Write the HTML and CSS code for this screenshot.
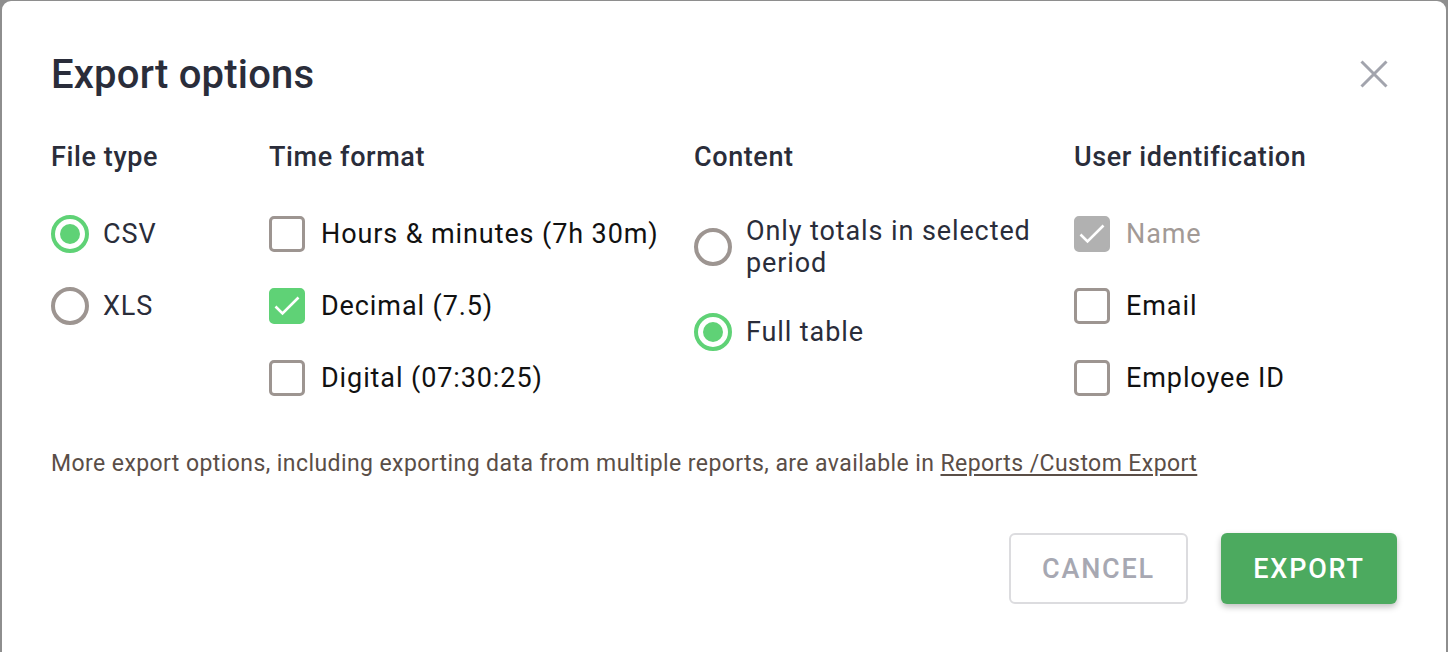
FILE: index.html
```html
<!DOCTYPE html>
<html lang="en">
<head>
<meta charset="utf-8">
<title>Export options</title>
<link rel="stylesheet" href="styles.css">
</head>
<body>
<div class="dialog">
  <div class="dialog-head">
    <h1 class="title">Export options</h1>
    <button class="close" aria-label="Close">
      <svg width="28" height="28" viewBox="0 0 28 28"><path d="M1.5 1.5 L26.5 26.5 M26.5 1.5 L1.5 26.5" stroke="#a2a4ad" stroke-width="3" fill="none"/></svg>
    </button>
  </div>
  <div class="columns">
    <div class="col">
      <h2 class="col-title">File type</h2>
      <div class="opts">
        <label class="opt"><span class="radio on"></span><span class="lbl navy">CSV</span></label>
        <label class="opt"><span class="radio"></span><span class="lbl navy">XLS</span></label>
      </div>
    </div>
    <div class="col">
      <h2 class="col-title">Time format</h2>
      <div class="opts">
        <label class="opt"><span class="check"></span><span class="lbl">Hours &amp; minutes (7h 30m)</span></label>
        <label class="opt"><span class="check on"><svg viewBox="0 0 36 36" width="36" height="36"><path d="M6.5 18.5 L13.5 25.5 L29.5 9.5" stroke="#fff" stroke-width="2.6" fill="none"/></svg></span><span class="lbl">Decimal (7.5)</span></label>
        <label class="opt"><span class="check"></span><span class="lbl">Digital (07:30:25)</span></label>
      </div>
    </div>
    <div class="col">
      <h2 class="col-title">Content</h2>
      <div class="opts">
        <label class="opt"><span class="radio"></span><span class="lbl navy wrap">Only totals in selected period</span></label>
        <label class="opt"><span class="radio on"></span><span class="lbl navy">Full table</span></label>
      </div>
    </div>
    <div class="col">
      <h2 class="col-title">User identification</h2>
      <div class="opts">
        <label class="opt"><span class="check disabled"><svg viewBox="0 0 36 36" width="36" height="36"><path d="M6.5 18.5 L13.5 25.5 L29.5 9.5" stroke="#fff" stroke-width="2.6" fill="none"/></svg></span><span class="lbl muted">Name</span></label>
        <label class="opt"><span class="check"></span><span class="lbl">Email</span></label>
        <label class="opt"><span class="check"></span><span class="lbl">Employee ID</span></label>
      </div>
    </div>
  </div>
  <p class="note">More export options, including exporting data from multiple reports, are available in <a href="#" class="link">Reports /Custom Export</a></p>
  <div class="actions">
    <button class="btn cancel">CANCEL</button>
    <button class="btn export">EXPORT</button>
  </div>
</div>
</body>
</html>
```
FILE: styles.css
```css
* { box-sizing: border-box; }
html, body { margin: 0; height: 100%; }
body {
  background: #8e8e8e;
  font-family: Roboto, "Noto Sans", "Liberation Sans", sans-serif;
  overflow: hidden;
  padding: 1px 2px 0 2px;
}
.dialog {
  background: #fff;
  border-radius: 9px 9px 0 0;
  height: 100%;
  padding: 0 49px 0 49px;
}
.dialog-head {
  display: flex;
  justify-content: space-between;
  align-items: center;
  padding-top: 50px;
}
.title {
  margin: 0;
  font-size: 40px;
  font-weight: 500;
  letter-spacing: 0.2px;
  color: #2a2d3a;
  line-height: 48px;
}
.close {
  border: 0;
  background: none;
  padding: 0;
  width: 28px;
  height: 28px;
  margin: -3px 9px 0 0;
  cursor: pointer;
}
.close svg { display: block; }
.columns {
  display: grid;
  grid-template-columns: 218px 425px 380px 1fr;
  margin-top: 42px;
}
.col-title {
  margin: 0;
  font-size: 27px;
  font-weight: 500;
  letter-spacing: 0.6px;
  color: #2a2d3a;
  line-height: 32px;
}
.opts {
  display: flex;
  flex-direction: column;
  gap: 34px;
  margin-top: 42px;
}
.opt {
  display: flex;
  align-items: center;
  gap: 14px;
  min-height: 38px;
}
.radio {
  flex: none;
  width: 38px;
  height: 38px;
  border-radius: 50%;
  border: 4px solid #9d9591;
  display: flex;
  align-items: center;
  justify-content: center;
}
.radio.on { border-color: #5fd276; }
.radio.on::after {
  content: "";
  width: 20px;
  height: 20px;
  border-radius: 50%;
  background: #5fd276;
}
.check {
  flex: none;
  width: 36px;
  height: 36px;
  margin-right: 2px;
  border: 3px solid #9d9591;
  border-radius: 5px;
  display: flex;
}
.check svg { display: block; margin: -3px; }
.check.on { background: #5fd276; border-color: #5fd276; }
.check.disabled { background: #b1b1b1; border-color: #b1b1b1; }
.lbl {
  font-size: 27px;
  line-height: 32px;
  color: #111;
  letter-spacing: 0.9px;
}
.lbl.navy { color: #2a2d3a; }
.lbl.muted { color: #a29a96; }
.lbl.wrap { max-width: 300px; }
.note {
  margin: 53px 0 0 0;
  font-size: 23px;
  line-height: 28px;
  letter-spacing: 0.42px;
  color: #5a4e47;
}
.link { color: #5a4e47; text-decoration: underline; text-underline-offset: 3px; }
.actions {
  display: flex;
  justify-content: flex-end;
  gap: 33px;
  margin-top: 55px;
}
.btn {
  font-family: Roboto, "Noto Sans", "Liberation Sans", sans-serif;
  font-size: 27px;
  font-weight: 500;
  letter-spacing: 1.8px;
  height: 71px;
  border-radius: 6px;
  cursor: pointer;
}
.cancel {
  width: 179px;
  background: #fff;
  border: 2px solid #dcdcdf;
  color: #a7a8b2;
}
.export {
  width: 176px;
  background: #4caa5f;
  border: 0;
  color: #fff;
  box-shadow: 0 3px 6px rgba(0,0,0,0.25);
}
```
